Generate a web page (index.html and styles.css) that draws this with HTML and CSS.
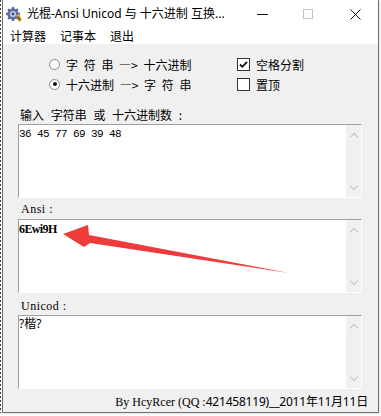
FILE: index.html
```html
<!DOCTYPE html>
<html lang="zh-CN">
<head>
    <meta charset="UTF-8">
    <title>光棍-Ansi Unicod 与 十六进制 互换</title>
    <link rel="stylesheet" href="styles.css">
</head>
<body>
    <div class="screen">
        <div class="desk"></div>
        <div class="window">
            <div class="titlebar">
                <svg class="app-icon" width="16" height="16" viewBox="0 0 16 16">
                    <path d="M6 1h2l.4 1.6 1.4.6 1.4-.9 1.4 1.4-.9 1.4.6 1.4L14 7v2l-1.6.4-.6 1.4.9 1.4-1.4 1.4-1.4-.9-1.4.6L8 15H6l-.4-1.6-1.4-.6-1.4.9-1.4-1.4.9-1.4-.6-1.4L0 9V7l1.6-.4.6-1.4-.9-1.4 1.4-1.4 1.4.9 1.4-.6z" fill="#5d6f9c"/>
                    <circle cx="7" cy="8" r="3" fill="#c9d3ea"/>
                    <circle cx="7" cy="8" r="1.4" fill="#3c4a74"/>
                    <path d="M10 9l3-1 3 6-3 2z" fill="#d9a531"/>
                    <path d="M11 11l2-.7 1.6 3.4-1.8 1z" fill="#8a5a12"/>
                </svg>
                <span class="title">光棍-Ansi Unicod 与 十六进制 互换...</span>
                <div class="caption-btns">
                    <span class="cap"><span class="min-line"></span></span>
                    <span class="cap"><span class="max-box"></span></span>
                    <span class="cap">
                        <svg width="11" height="11" viewBox="0 0 11 11">
                            <path d="M0.5 0.5l10 10M10.5 0.5l-10 10" stroke="#111" stroke-width="1"/>
                        </svg>
                    </span>
                </div>
            </div>
            <div class="menubar">
                <span>计算器</span>
                <span>记事本</span>
                <span>退出</span>
            </div>
            <div class="client">
                <div class="options">
                    <div class="opt"><span class="radio"></span>字 符 串 —&gt; 十六进制</div>
                    <div class="opt"><span class="check">
                        <svg width="9" height="9" viewBox="0 0 9 9"><path d="M1 4.5l2.3 2.3L8 1.8" fill="none" stroke="#111" stroke-width="1.8"/></svg>
                    </span>空格分割</div>
                    <div class="opt"><span class="radio on"></span>十六进制 —&gt; 字 符 串</div>
                    <div class="opt"><span class="check"></span>置顶</div>
                </div>

                <div class="label label-input">输入 字符串 或 十六进制数 :</div>
                <div class="field">
                    <div class="field-text mono">36 45 77 69 39 48</div>
                    <div class="scroll"><span class="up"></span><span class="down"></span></div>
                </div>

                <div class="label serif">Ansi :</div>
                <div class="field">
                    <div class="field-text ansi">6Ewi9H</div>
                    <div class="scroll"><span class="up"></span><span class="down"></span></div>
                    <svg class="arrow" width="280" height="60" viewBox="0 0 280 60">
                        <path d="M44 14L69 5L70 15L270 53L71 23L65 27z" fill="#ee3b3b"/>
                    </svg>
                </div>

                <div class="label serif label-unicod">Unicod :</div>
                <div class="field">
                    <div class="field-text">?楷?</div>
                    <div class="scroll"><span class="up"></span><span class="down"></span></div>
                </div>

                <div class="footer"><span class="serif">By HcyRcer (QQ :</span>421458119)__2011年11月11日</div>
            </div>
        </div>
    </div>
</body>
</html>
```

FILE: styles.css
```css
body {
    margin: 0;
    background: #fff;
    font-family: "Noto Sans", "Noto Sans CJK SC", sans-serif;
    font-size: 12px;
    color: #000;
}
.screen {
    display: flex;
    height: 416px;
}
.desk {
    width: 1px;
    margin-right: 1px;
    height: 413px;
    background: repeating-linear-gradient(#444 0 2px, #fff 2px 4px);
}
.window {
    width: 375px;
    height: 412px;
    border-left: 1px solid #707070;
    border-right: 1px solid #707070;
    border-bottom: 1px solid #707070;
    display: flex;
    flex-direction: column;
    box-shadow: 1px 1px 2px rgba(0, 0, 0, 0.12);
}

/* title bar */
.titlebar {
    height: 28px;
    background: #fff;
    display: flex;
    align-items: center;
}
.app-icon {
    margin-left: 3px;
    margin-right: 5px;
    flex: none;
}
.title {
    flex: 1;
    white-space: nowrap;
    line-height: 16px;
    font-size: 12px;
}
.caption-btns {
    display: flex;
    height: 28px;
}
.cap {
    width: 46px;
    height: 28px;
    display: flex;
    align-items: center;
    justify-content: center;
}
.min-line {
    width: 11px;
    height: 1px;
    background: #111;
    margin-left: -1px;
}
.max-box {
    width: 8px;
    height: 8px;
    border: 1px solid #c4c4c4;
    margin-left: -2px;
}

/* menu */
.menubar {
    height: 16px;
    background: #fff;
    display: flex;
    gap: 14px;
    padding-left: 7px;
    line-height: 16px;
    font-family: "Noto Sans CJK SC", sans-serif;
    font-size: 12px;
}

/* client area */
.client {
    flex: 1;
    background: #f0f0f0;
    padding: 10px 0 0 15px;
}
.options {
    display: grid;
    grid-template-columns: 188px auto;
    grid-auto-rows: 20px;
    padding-left: 31px;
    font-family: "Noto Sans CJK SC", sans-serif;
    font-size: 12px;
    word-spacing: 3px;
}
.opt {
    display: flex;
    align-items: center;
    white-space: pre;
}
.radio {
    width: 9px;
    height: 9px;
    border-radius: 50%;
    border: 1px solid #8a8a8a;
    background: #fff;
    margin-right: 6px;
    display: flex;
    align-items: center;
    justify-content: center;
    box-sizing: content-box;
}
.radio.on::after {
    content: "";
    width: 4px;
    height: 4px;
    border-radius: 50%;
    background: #111;
}
.check {
    width: 11px;
    height: 11px;
    border: 1px solid #333;
    background: #fff;
    margin-right: 6px;
    display: flex;
    align-items: center;
    justify-content: center;
}

.label {
    padding-left: 2px;
    height: 21px;
    line-height: 19px;
    padding-top: 2px;
    box-sizing: border-box;
    font-family: "Noto Sans CJK SC", sans-serif;
}
.label-input {
    margin-top: 10px;
    height: 20px;
    padding-top: 1px;
    padding-left: 2px;
    word-spacing: 4px;
}
.label.serif {
    padding-left: 3px;
}
.label-unicod {
    height: 22px;
    padding-top: 4px;
}
.serif {
    font-family: "Liberation Serif", "Noto Sans CJK SC", serif;
    letter-spacing: 0.5px;
}

.field {
    position: relative;
    width: 344px;
    height: 74px;
    box-sizing: border-box;
    background: #fff;
    border-top: 1px solid #a0a0a0;
    border-left: 1px solid #a0a0a0;
    border-right: 1px solid #fff;
    border-bottom: 1px solid #fff;
    display: flex;
}
.field:first-of-type {
    height: 75px;
}
.field-text {
    flex: 1;
    padding: 1px 0 0 0;
    line-height: 14px;
    font-family: "Noto Sans", "Noto Sans CJK SC", sans-serif;
    font-size: 12px;
    white-space: pre;
}
.field-text.mono {
    font-family: "Liberation Mono", monospace;
    font-size: 11px;
    letter-spacing: -0.6px;
    padding-top: 2px;
}
.field-text.ansi {
    font-family: "Liberation Serif", serif;
    font-weight: bold;
    font-size: 12px;
    letter-spacing: -0.6px;
    padding-top: 2px;
}
.scroll {
    width: 15px;
    background: #f0f0f0;
    display: flex;
    flex-direction: column;
    justify-content: space-between;
    align-items: center;
    padding: 7px 0 6px;
}
.up, .down {
    width: 5px;
    height: 5px;
    border-left: 1px solid #c2c2c2;
    border-top: 1px solid #c2c2c2;
    transform: rotate(45deg);
}
.up {
    margin-top: 2px;
}
.down {
    transform: rotate(225deg);
    margin-bottom: 2px;
}
.arrow {
    position: absolute;
    left: 0;
    top: 0;
}

.footer {
    text-align: right;
    padding-right: 10px;
    padding-top: 5px;
    line-height: 16px;
    white-space: nowrap;
    font-family: "Noto Sans", "Noto Sans CJK SC", sans-serif;
    letter-spacing: -0.2px;
}
.footer .serif {
    letter-spacing: 0;
}
```
